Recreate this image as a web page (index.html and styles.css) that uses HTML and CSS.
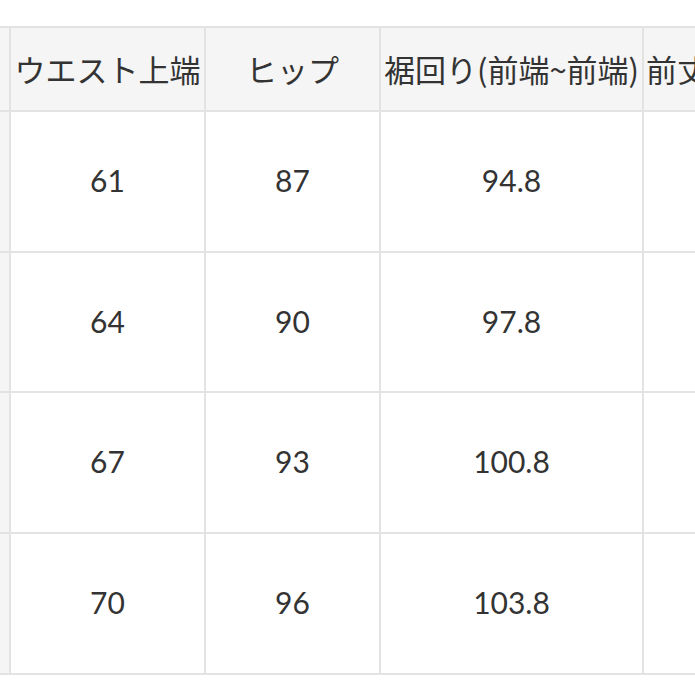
FILE: index.html
```html
<!DOCTYPE html>
<html lang="ja">
<head>
<meta charset="utf-8">
<title>サイズ表</title>
<link rel="stylesheet" href="styles.css">
</head>
<body>
<div class="scroller">
  <div class="size-table">
    <div class="cell side"></div>
    <div class="cell head">ウエスト上端</div>
    <div class="cell head">ヒップ</div>
    <div class="cell head">裾回り(前端~前端)</div>
    <div class="cell head start">前丈</div>

    <div class="cell side"></div>
    <div class="cell num">61</div>
    <div class="cell num">87</div>
    <div class="cell num">94.8</div>
    <div class="cell num"></div>

    <div class="cell side"></div>
    <div class="cell num">64</div>
    <div class="cell num">90</div>
    <div class="cell num">97.8</div>
    <div class="cell num"></div>

    <div class="cell side"></div>
    <div class="cell num">67</div>
    <div class="cell num">93</div>
    <div class="cell num">100.8</div>
    <div class="cell num"></div>

    <div class="cell side"></div>
    <div class="cell num">70</div>
    <div class="cell num">96</div>
    <div class="cell num">103.8</div>
    <div class="cell num"></div>
  </div>
</div>
</body>
</html>
```

FILE: styles.css
```css
html, body {
  margin: 0;
  padding: 0;
  background: #ffffff;
}

.scroller {
  width: 695px;
  height: 695px;
  overflow: hidden;
  padding-top: 26px;
  box-sizing: border-box;
}

.size-table {
  display: grid;
  grid-template-columns: 11px 195px 175px 263px 120px;
  grid-template-rows: 84px 141px 140px 141px 141px;
  width: max-content;
  border-top: 2px solid #e3e3e3;
  color: #333333;
}

.cell {
  box-sizing: border-box;
  border-right: 2px solid #e3e3e3;
  border-bottom: 2px solid #e3e3e3;
  display: flex;
  align-items: center;
  justify-content: center;
  white-space: nowrap;
  overflow: hidden;
}

.head {
  background: #f5f5f5;
  font-family: "Noto Sans CJK JP", "Noto Sans", sans-serif;
  font-size: 31px;
  padding-bottom: 2px;
}

.start {
  justify-content: flex-start;
  padding-left: 2px;
}

.side {
  background: #f5f5f5;
}

.num {
  font-family: "Lato", "Noto Sans", sans-serif;
  font-size: 30px;
  font-weight: 400;
  padding-bottom: 3px;
}
```
